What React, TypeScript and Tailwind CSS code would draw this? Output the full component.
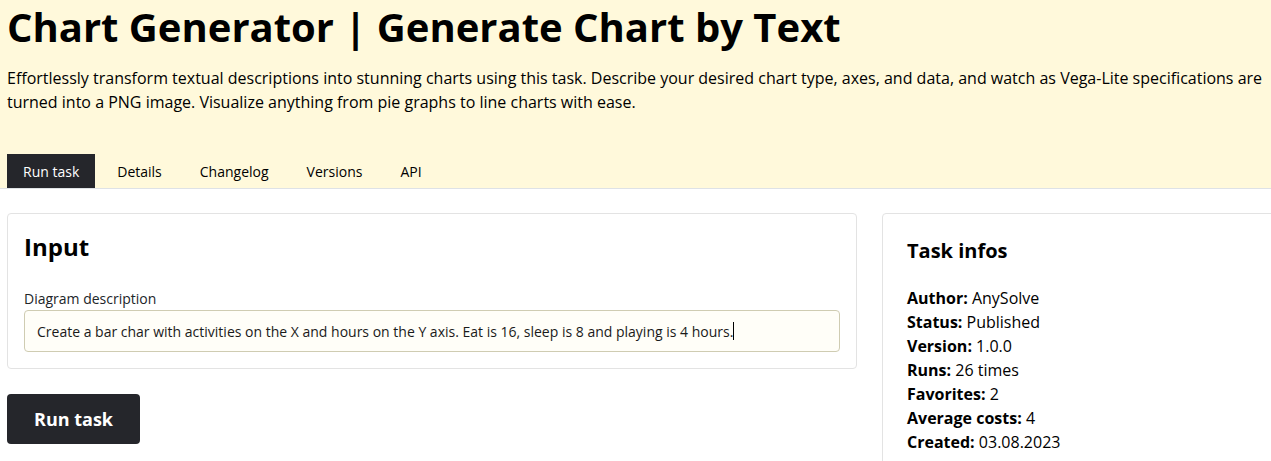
export default function App() {
  const infos: [string, string][] = [
    ["Author:", "AnySolve"],
    ["Status:", "Published"],
    ["Version:", "1.0.0"],
    ["Runs:", "26 times"],
    ["Favorites:", "2"],
    ["Average costs:", "4"],
    ["Created:", "03.08.2023"],
  ];
  const tabs = ["Run task", "Details", "Changelog", "Versions", "API"];
  return (
    <div
      className="w-[1271px] h-[461px] overflow-hidden bg-white text-black"
      style={{ fontFamily: '"Open Sans", sans-serif' }}
    >
      <div className="bg-[#fff9db] border-b border-[#dee2e6] pl-[7px] pr-[3px]">
        <h1 className="text-[40px] leading-[54px] font-bold">
          Chart Generator | Generate Chart by Text
        </h1>
        <p className="mt-[12px] text-[16px] leading-[24px]">
          Effortlessly transform textual descriptions into stunning charts using this task. Describe your desired chart type, axes, and data, and watch as Vega-Lite specifications are turned into a PNG image. Visualize anything from pie graphs to line charts with ease.
        </p>
        <div className="mt-[40px] flex gap-[6px]">
          {tabs.map((t, i) => (
            <div
              key={t}
              className={
                "h-[34px] px-[16px] flex items-center text-[14px] " +
                (i === 0 ? "bg-[#25262b] text-white" : "text-black")
              }
            >
              {t}
            </div>
          ))}
        </div>
      </div>
      <div className="flex gap-[25px] px-[7px] pt-[24px]">
        <div className="w-[850px] shrink-0">
          <div className="border border-[#e3e3e3] rounded-[4px] p-[16px]">
            <h2 className="text-[24px] leading-[34px] font-bold">Input</h2>
            <div className="mt-[24px] text-[14px] leading-[21px] text-[#212529]">
              Diagram description
            </div>
            <div className="mt-[1px] h-[42px] border border-[#cfccb2] rounded-[4px] bg-[#fffef8] px-[12px] flex items-center text-[14px] text-[#1a1a1a]">
              <span>
                Create a bar char with activities on the X and hours on the Y axis. Eat is 16, sleep is 8 and playing is 4 hours.
              </span>
              <span className="inline-block w-[1px] h-[18px] bg-black" />
            </div>
          </div>
          <button className="mt-[25px] h-[50px] px-[27px] rounded-[4px] bg-[#25262b] text-white text-[18px] font-bold">
            Run task
          </button>
        </div>
        <div className="w-[420px] shrink-0 border border-[#e3e3e3] rounded-[4px] px-[24px] pt-[23px] h-[300px]">
          <h2 className="text-[20px] leading-[27px] font-bold">Task infos</h2>
          <div className="mt-[22px] text-[16px] leading-[24px]">
            {infos.map(([k, v]) => (
              <div key={k}>
                <span className="font-bold">{k}</span> {v}
              </div>
            ))}
          </div>
        </div>
      </div>
    </div>
  );
}
